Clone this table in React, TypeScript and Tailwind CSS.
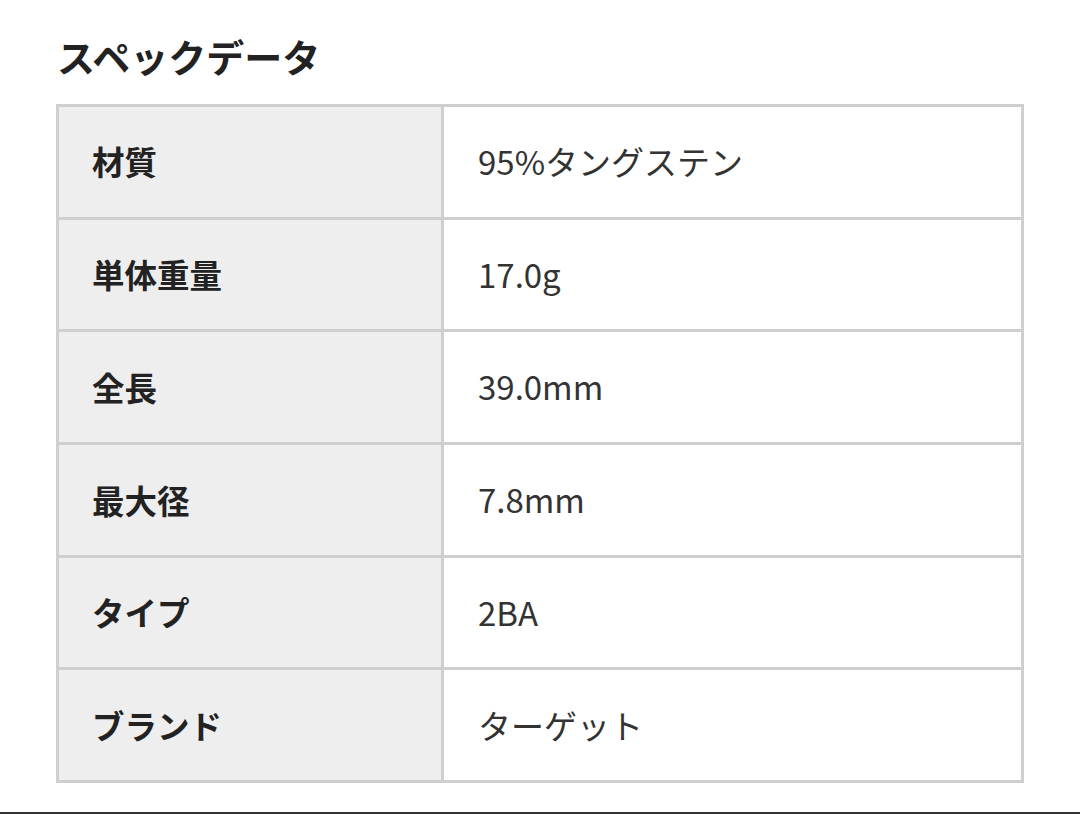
import React from "react";

const rows: [string, string][] = [
  ["材質", "95%タングステン"],
  ["単体重量", "17.0g"],
  ["全長", "39.0mm"],
  ["最大径", "7.8mm"],
  ["タイプ", "2BA"],
  ["ブランド", "ターゲット"],
];

export default function App() {
  return (
    <div
      className="w-[1080px] h-[814px] bg-white flex flex-col"
      style={{ fontFamily: '"Noto Sans CJK JP", "Noto Sans", sans-serif' }}
    >
      <div className="flex-1 pl-[56px] pt-[32px]">
        <h2 className="text-[38px] leading-[48px] font-bold text-[#222] mb-[24px] pl-[1px]">
          スペックデータ
        </h2>
        <div className="w-[968px] grid grid-cols-[385px_580px] border-l-[3px] border-t-[3px] border-[#cfcfcf]">
          {rows.map(([k, v]) => (
            <React.Fragment key={k}>
              <div className="h-[112.7px] bg-[#eeeeee] border-r-[3px] border-b-[3px] border-[#cfcfcf] flex items-center pl-[33px] text-[32.5px] font-bold text-[#222]">
                {k}
              </div>
              <div className="h-[112.7px] bg-white border-r-[3px] border-b-[3px] border-[#cfcfcf] flex items-center pl-[34px] text-[33px] text-[#333]">
                {v}
              </div>
            </React.Fragment>
          ))}
        </div>
      </div>
      <div className="h-[2px] bg-[#333]" />
    </div>
  );
}
